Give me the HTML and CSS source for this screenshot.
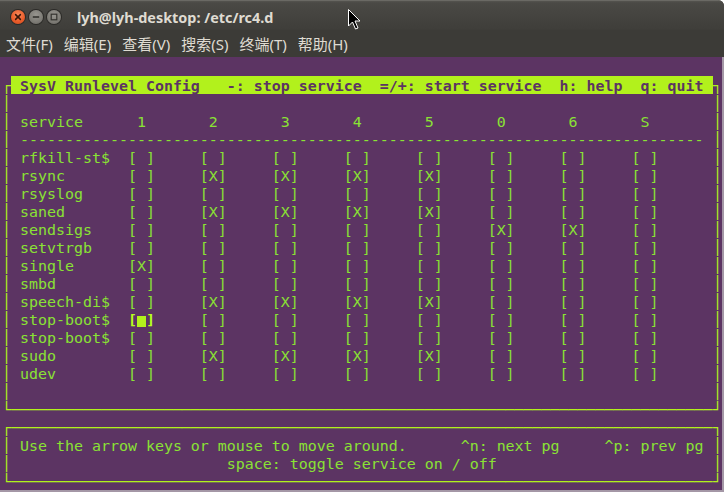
FILE: index.html
```html
<!DOCTYPE html>
<html>
<head>
<meta charset="utf-8">
<link rel="stylesheet" href="styles.css">
</head>
<body>
<div class="win">
  <div class="titlebar">
    <div class="btns">
      <span class="btn close"><svg width="14" height="14" viewBox="0 0 14 14"><path d="M4.6 4.6 L9.4 9.4 M9.4 4.6 L4.6 9.4" stroke="#3a1608" stroke-width="1.5" stroke-linecap="round"/></svg></span>
      <span class="btn gray"><svg width="14" height="14" viewBox="0 0 14 14"><path d="M3.8 7 H10.2" stroke="#34332f" stroke-width="1.6"/></svg></span>
      <span class="btn gray"><svg width="14" height="14" viewBox="0 0 14 14"><rect x="4.2" y="4.2" width="5.6" height="5.6" fill="none" stroke="#34332f" stroke-width="1.2"/></svg></span>
    </div>
    <span class="title">lyh@lyh-desktop: /etc/rc4.d</span>
  </div>
  <div class="menubar">
    <span class="mi">文件(F)</span>
    <span class="mi">编辑(E)</span>
    <span class="mi">查看(V)</span>
    <span class="mi">搜索(S)</span>
    <span class="mi">终端(T)</span>
    <span class="mi">帮助(H)</span>
  </div>
  <div class="term">
    <div class="r"></div>
    <div class="r"><span class="e b">┌</span><span class="c t"> SysV Runlevel Config   -: stop service  =/+: start service  h: help  q: quit </span><span class="e b">┐</span></div>
    <div class="r"><span class="e b">│</span><span class="c"></span><span class="e b">│</span></div>
    <div class="r"><span class="e b">│</span><span class="c"> service      1       2       3       4       5       0       6       S</span><span class="e b">│</span></div>
    <div class="r"><span class="e b">│</span><span class="c"> ----------------------------------------------------------------------------</span><span class="e b">│</span></div>
    <div class="r"><span class="e b">│</span><span class="c"> rfkill-st$  [ ]     [ ]     [ ]     [ ]     [ ]     [ ]     [ ]     [ ]</span><span class="e b">│</span></div>
    <div class="r"><span class="e b">│</span><span class="c"> rsync       [ ]     [X]     [X]     [X]     [X]     [ ]     [ ]     [ ]</span><span class="e b">│</span></div>
    <div class="r"><span class="e b">│</span><span class="c"> rsyslog     [ ]     [ ]     [ ]     [ ]     [ ]     [ ]     [ ]     [ ]</span><span class="e b">│</span></div>
    <div class="r"><span class="e b">│</span><span class="c"> saned       [ ]     [X]     [X]     [X]     [X]     [ ]     [ ]     [ ]</span><span class="e b">│</span></div>
    <div class="r"><span class="e b">│</span><span class="c"> sendsigs    [ ]     [ ]     [ ]     [ ]     [ ]     [X]     [X]     [ ]</span><span class="e b">│</span></div>
    <div class="r"><span class="e b">│</span><span class="c"> setvtrgb    [ ]     [ ]     [ ]     [ ]     [ ]     [ ]     [ ]     [ ]</span><span class="e b">│</span></div>
    <div class="r"><span class="e b">│</span><span class="c"> single      [X]     [ ]     [ ]     [ ]     [ ]     [ ]     [ ]     [ ]</span><span class="e b">│</span></div>
    <div class="r"><span class="e b">│</span><span class="c"> smbd        [ ]     [ ]     [ ]     [ ]     [ ]     [ ]     [ ]     [ ]</span><span class="e b">│</span></div>
    <div class="r"><span class="e b">│</span><span class="c"> speech-di$  [ ]     [X]     [X]     [X]     [X]     [ ]     [ ]     [ ]</span><span class="e b">│</span></div>
    <div class="r"><span class="e b">│</span><span class="c"> stop-boot$  <span class="hl">[</span><span class="cur"></span><span class="hl">]</span>     [ ]     [ ]     [ ]     [ ]     [ ]     [ ]     [ ]</span><span class="e b">│</span></div>
    <div class="r"><span class="e b">│</span><span class="c"> stop-boot$  [ ]     [ ]     [ ]     [ ]     [ ]     [ ]     [ ]     [ ]</span><span class="e b">│</span></div>
    <div class="r"><span class="e b">│</span><span class="c"> sudo        [ ]     [X]     [X]     [X]     [X]     [ ]     [ ]     [ ]</span><span class="e b">│</span></div>
    <div class="r"><span class="e b">│</span><span class="c"> udev        [ ]     [ ]     [ ]     [ ]     [ ]     [ ]     [ ]     [ ]</span><span class="e b">│</span></div>
    <div class="r"><span class="e b">│</span><span class="c"></span><span class="e b">│</span></div>
    <div class="r"><span class="e b">└</span><span class="c b">──────────────────────────────────────────────────────────────────────────────</span><span class="e b">┘</span></div>
    <div class="r"><span class="e b">┌</span><span class="c b">──────────────────────────────────────────────────────────────────────────────</span><span class="e b">┐</span></div>
    <div class="r"><span class="e b">│</span><span class="c"> Use the arrow keys or mouse to move around.      ^n: next pg     ^p: prev pg</span><span class="e b">│</span></div>
    <div class="r"><span class="e b">│</span><span class="c">                        space: toggle service on / off</span><span class="e b">│</span></div>
    <div class="r"><span class="e b">└</span><span class="c b">──────────────────────────────────────────────────────────────────────────────</span><span class="e b">┘</span></div>
  </div>
  <svg class="pointer" width="14" height="22" viewBox="0 0 14 22"><path d="M0.5 0.5 L0.5 17 L4.5 13 L7.5 20 L10 19 L7 12 L12 12 Z" fill="#000" stroke="#fff" stroke-width="1" stroke-linejoin="round"/></svg>
</div>
</body>
</html>
```

FILE: styles.css
```css
html, body {
  margin: 0;
  padding: 0;
  background: #ffffff;
}

.win {
  position: relative;
  width: 724px;
  height: 492px;
  background: #3c3b37;
  border-top-right-radius: 6px;
  overflow: hidden;
}

.titlebar {
  height: 30px;
  display: flex;
  align-items: center;
  background: linear-gradient(#55544f 0px, #4a4945 2px, #3f3e3a 28px, #3c3b37 30px);
  border-top: 1px solid #6a6964;
  box-sizing: border-box;
  padding-left: 11px;
  padding-top: 3px;
}

.btns {
  display: flex;
  gap: 4px;
}

.btn {
  width: 14px;
  height: 14px;
  border-radius: 50%;
  display: flex;
  align-items: center;
  justify-content: center;
}

.btn svg {
  display: block;
}

.close {
  background: radial-gradient(circle at 50% 35%, #f58a5c 0%, #ec5e2c 55%, #c8451a 100%);
  box-shadow: 0 0 0 1px #2b2a27;
}

.gray {
  background: radial-gradient(circle at 50% 35%, #97958f 0%, #7e7c76 60%, #66645f 100%);
  box-shadow: 0 0 0 1px #2b2a27;
}

.title {
  margin-left: 16px;
  color: #dfdbd2;
  font-family: "Noto Sans", "DejaVu Sans", sans-serif;
  font-weight: bold;
  font-size: 14.4px;
}

.menubar {
  height: 27px;
  display: flex;
  align-items: center;
  gap: 11px;
  padding-left: 6px;
  padding-bottom: 1px;
  box-sizing: border-box;
  background: #3c3b37;
}

.mi {
  color: #dfdbd2;
  font-family: "Noto Sans", "Noto Sans CJK SC", sans-serif;
  font-size: 15px;
}

.term {
  height: 435px;
  box-sizing: border-box;
  padding: 1px 0 0 2px;
  background: #5c3463;
  border-right: 2px solid #a497a6;
  border-bottom: 2px solid #a497a6;
  font-family: "DejaVu Sans Mono", monospace;
  font-size: 14.95px;
  color: #8ae234;
}

.r {
  display: flex;
  height: 18px;
  line-height: 20px;
  white-space: pre;
}

.e {
  width: 9px;
  flex: none;
  overflow: hidden;
}

.c {
  width: 702px;
  flex: none;
  overflow: hidden;
}

.b {
  color: #b2f11c;
}

.t {
  background: #b2f11c;
  color: #5c3463;
  font-weight: bold;
}

.hl {
  color: #b8ff1c;
  font-weight: bold;
}

.cur {
  display: inline-block;
  width: 9px;
  height: 11px;
  background: #b2f11c;
  vertical-align: -2px;
}

.pointer {
  position: absolute;
  left: 348px;
  top: 9px;
}
```
